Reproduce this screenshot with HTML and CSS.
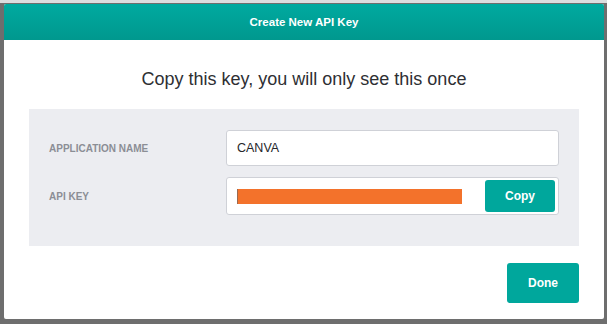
FILE: index.html
```html
<!DOCTYPE html>
<html lang="en">
<head>
    <meta charset="UTF-8">
    <meta name="viewport" content="width=device-width, initial-scale=1.0">
    <title>Create New API Key</title>
    <link rel="stylesheet" href="styles.css">
</head>
<body>
    <div class="backdrop">
        <div class="modal">
            <div class="modal-header">Create New API Key</div>

            <div class="modal-body">
                <h2 class="modal-title">Copy this key, you will only see this once</h2>

                <div class="key-panel">
                    <div class="field-row">
                        <label class="field-label" for="app-name">APPLICATION NAME</label>
                        <input id="app-name" class="field-input" type="text" value="CANVA" readonly>
                    </div>
                    <div class="field-row">
                        <span class="field-label">API KEY</span>
                        <div class="key-box">
                            <span class="key-redacted"></span>
                            <button class="btn btn-copy">Copy</button>
                        </div>
                    </div>
                </div>
            </div>

            <div class="modal-footer">
                <button class="btn btn-done">Done</button>
            </div>
        </div>
    </div>
</body>
</html>
```

FILE: styles.css
```css
html, body {
    margin: 0;
    height: 100%;
}
body {
    font-family: "Liberation Sans", Arial, sans-serif;
    background: #6e6e6e;
    border-top: 3px solid #dcdddf;
    box-sizing: border-box;
}
.backdrop {
    padding: 1px 3px 5px 4px;
}
.modal {
    background: #ffffff;
    height: 315px;
    border-radius: 2px;
    overflow: hidden;
    display: flex;
    flex-direction: column;
}
.modal-header {
    height: 36px;
    line-height: 36px;
    text-align: center;
    color: #ffffff;
    font-weight: bold;
    font-size: 11.5px;
    background: linear-gradient(180deg, #00aaa0 0%, #00988e 100%);
}
.modal-body {
    padding: 29px 25px 0;
}
.modal-title {
    margin: 0 0 19px;
    font-size: 18px;
    line-height: 21px;
    font-weight: normal;
    text-align: center;
    color: #2e2f33;
}
.key-panel {
    background: #ecedf1;
    padding: 21px 20px 31px;
    display: flex;
    flex-direction: column;
    gap: 11px;
}
.field-row {
    display: flex;
    align-items: center;
}
.field-label {
    width: 177px;
    flex-shrink: 0;
    font-size: 10px;
    font-weight: bold;
    color: #8b8e95;
}
.field-input {
    flex: 1;
    height: 36px;
    box-sizing: border-box;
    border: 1px solid #cfd1d7;
    border-radius: 3px;
    background: #ffffff;
    padding: 0 10px;
    font-family: inherit;
    font-size: 12.5px;
    color: #26272b;
    outline: none;
}
.key-box {
    flex: 1;
    height: 38px;
    box-sizing: border-box;
    border: 1px solid #cfd1d7;
    border-radius: 3px;
    background: #ffffff;
    padding: 2px 3px 2px 10px;
    display: flex;
    align-items: center;
    justify-content: space-between;
}
.key-redacted {
    width: 224px;
    height: 15px;
    background: #f3722b;
    border-left: 1px solid #9a6a50;
}
.btn {
    border: none;
    border-radius: 3px;
    background: #00a79c;
    color: #ffffff;
    font-family: inherit;
    font-weight: bold;
    font-size: 12px;
    cursor: pointer;
}
.btn-copy {
    width: 70px;
    height: 32px;
}
.modal-footer {
    display: flex;
    justify-content: flex-end;
    padding: 17px 25px 0;
}
.btn-done {
    width: 72px;
    height: 40px;
}
```
